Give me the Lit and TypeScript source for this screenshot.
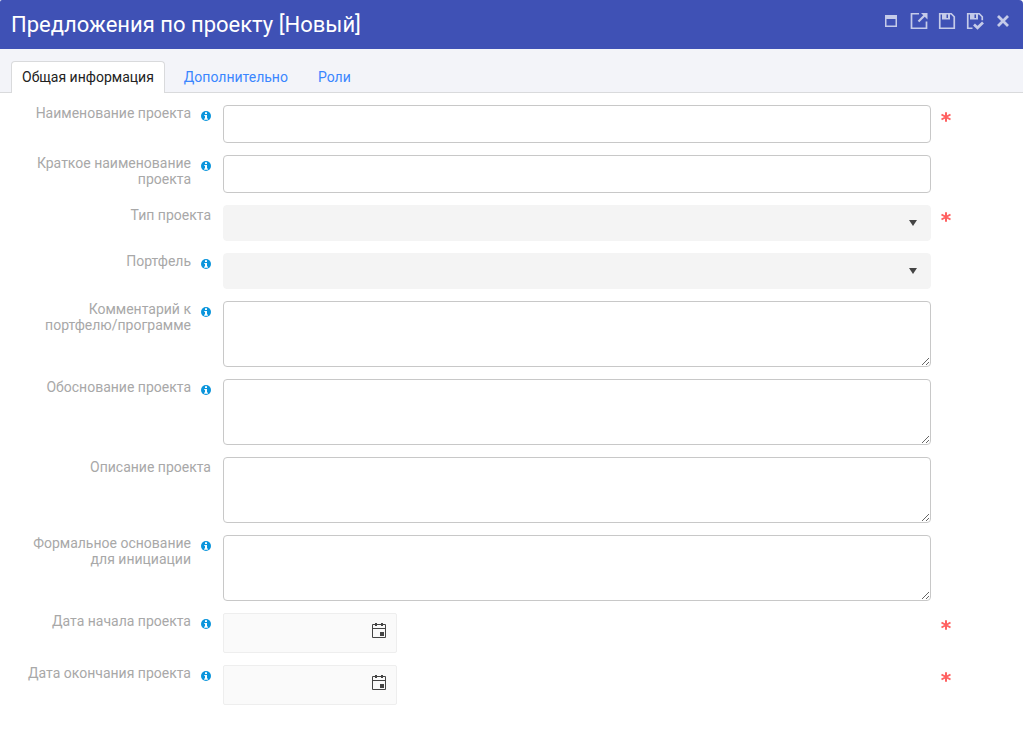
import { LitElement, html, css, svg, nothing } from "lit";
import { customElement, state } from "lit/decorators.js";

type Kind = "text" | "select" | "area" | "date";

interface Field {
  id: string;
  label: string;
  kind: Kind;
  hint?: boolean;
  required?: boolean;
}

const FIELDS: Field[] = [
  { id: "name", label: "Наименование проекта", kind: "text", hint: true, required: true },
  { id: "short-name", label: "Краткое наименование проекта", kind: "text", hint: true },
  { id: "type", label: "Тип проекта", kind: "select", required: true },
  { id: "portfolio", label: "Портфель", kind: "select", hint: true },
  { id: "comment", label: "Комментарий к портфелю/программе", kind: "area", hint: true },
  { id: "reason", label: "Обоснование проекта", kind: "area", hint: true },
  { id: "description", label: "Описание проекта", kind: "area" },
  { id: "basis", label: "Формальное основание для инициации", kind: "area", hint: true },
  { id: "start", label: "Дата начала проекта", kind: "date", hint: true, required: true },
  { id: "end", label: "Дата окончания проекта", kind: "date", hint: true, required: true },
];

const TABS = ["Общая информация", "Дополнительно", "Роли"];

const ACTIONS = [
  {
    title: "Развернуть",
    icon: svg`<path d="M3.75 3.75h10.500v10.500H3.750z" stroke-width="1.500"/><path d="M3 5h12" stroke-width="4"/>`,
  },
  {
    title: "Открыть в новом окне",
    icon: svg`<path d="M9 1.750H1.500v14.500h15V9.500" stroke-width="1.700"/><path d="M8.500 9.500l6-6" stroke-width="2.200"/><path d="M11 1h6.500v6.500z" fill="currentColor" stroke="none"/>`,
  },
  {
    title: "Сохранить",
    icon: svg`<path d="M1.750 1.750h11.500l3 3v11.500H1.750z" stroke-width="1.700"/><path d="M4 1h8v6.500H4z" fill="currentColor" stroke="none"/><path class="slot" d="M8.500 2.500H10v3.500H8.500z"/>`,
  },
  {
    title: "Сохранить и закрыть",
    icon: svg`<path d="M6.500 16.250H1.750V1.750h11.500l3 3v3.500" stroke-width="1.700"/><path d="M4 1h8v6.500H4z" fill="currentColor" stroke="none"/><path class="slot" d="M8.500 2.500H10v3.500H8.500z"/><path d="M8 12.500l3.500 3.300 5.500-5.300" stroke-width="2.700"/>`,
  },
  {
    title: "Закрыть",
    icon: svg`<path d="M4 4l10 10m0-10l-10 10" stroke-width="2.800"/>`,
  },
];

@customElement("app-root")
export class AppRoot extends LitElement {
  @state() private active = 0;

  static styles = css`
    :host {
      display: block;
      min-height: 100vh;
      background: #fff;
      color: #222;
      font: 14px/16px Roboto, "Liberation Sans", sans-serif;
    }
    * {
      box-sizing: border-box;
    }
    .header {
      display: flex;
      justify-content: space-between;
      align-items: flex-start;
      height: 49px;
      padding: 12px 11px;
      background: #3f51b5;
      border-radius: 2px 4px 0 0;
      color: #fff;
    }
    .title {
      margin: 0;
      font-size: 22px;
      font-weight: 400;
      line-height: 25px;
    }
    .actions {
      display: flex;
      gap: 10px;
    }
    .action {
      display: block;
      width: 18px;
      height: 18px;
      padding: 0;
      border: 0;
      background: none;
      color: #c5cbe9;
      cursor: pointer;
    }
    .action svg {
      display: block;
      fill: none;
      stroke: currentColor;
    }
    .action .slot {
      fill: #3f51b5;
      stroke: none;
    }
    .tabs {
      display: flex;
      gap: 8px;
      height: 44px;
      padding: 12px 11px 0;
      background: #f3f4f9;
      border-bottom: 1px solid #d9dadc;
    }
    .tab {
      height: 32px;
      padding: 0 10px 2px;
      border: 1px solid transparent;
      border-bottom: 0;
      border-radius: 4px 4px 0 0;
      background: none;
      color: #3a86ff;
      font: inherit;
      cursor: pointer;
    }
    .tab.active {
      background: #fff;
      border-color: #d9dadc;
      color: #222;
    }
    .form {
      display: grid;
      gap: 12px;
      padding: 12px 0;
    }
    .row {
      display: grid;
      grid-template-columns: 211px minmax(0, 1fr) 80px;
      column-gap: 12px;
      align-items: start;
    }
    .caption {
      display: flex;
      justify-content: flex-end;
      gap: 10px;
      padding-left: 20px;
      color: #a8a8a8;
      text-align: right;
    }
    .caption.plain {
      padding-top: 2px;
    }
    .hint {
      flex: none;
      margin-top: 6px;
    }
    .control {
      display: block;
      width: 100%;
      margin: 0;
      border: 1px solid #c8c8c8;
      border-radius: 4px;
      background: #fff;
      font: inherit;
      padding: 8px;
    }
    .text {
      height: 38px;
    }
    .area {
      height: 66px;
      resize: vertical;
    }
    .picker {
      display: grid;
      align-items: center;
    }
    .picker > * {
      grid-area: 1 / 1;
    }
    .picker .glyph {
      justify-self: end;
      pointer-events: none;
    }
    .select {
      height: 36px;
      appearance: none;
      background: #f4f4f4;
      border-color: #f4f4f4;
    }
    .arrow {
      margin-right: 14px;
    }
    .date {
      width: 174px;
    }
    .date .control {
      height: 40px;
      background: #fafafa;
      border-color: #eee;
      border-radius: 2px;
    }
    .calendar {
      justify-self: end;
      width: 16px;
      height: 16px;
      margin: 0 10px 4px;
      padding: 0;
      border: 0;
      background: none;
      cursor: pointer;
    }
    .calendar svg {
      display: block;
    }
    .star {
      margin: 7px 0 0 -2px;
    }
  `;

  private renderControl(f: Field) {
    switch (f.kind) {
      case "text":
        return html`<input class="control text" id=${f.id} type="text" ?required=${f.required} />`;
      case "area":
        return html`<textarea class="control area" id=${f.id}></textarea>`;
      case "select":
        return html`<div class="picker">
          <select class="control select" id=${f.id} ?required=${f.required}><option value=""></option></select>
          <svg class="glyph arrow" width="8" height="6" viewBox="0 0 8 6" aria-hidden="true">
            <path d="M0 0h8L4 6z" fill="#444" />
          </svg>
        </div>`;
      case "date":
        return html`<div class="picker date">
          <input class="control" id=${f.id} type="text" ?required=${f.required} />
          <button class="calendar" type="button" aria-label="Выбрать дату">
            <svg width="16" height="16" viewBox="0 0 16 16" fill="none" stroke="#444">
              <path d="M1.500 1.500h13v13h-13zM1.500 5.500h13" />
              <path d="M5 0v3M11 0v3" stroke-width="2" />
              <path d="M9 9h4v4H9z" fill="#444" stroke="none" />
            </svg>
          </button>
        </div>`;
    }
  }

  private renderField(f: Field) {
    return html`<div class="row">
      <div class="caption ${f.hint ? "" : "plain"}">
        <label for=${f.id}>${f.label}</label>
        ${f.hint
          ? html`<svg class="hint" width="10" height="10" viewBox="0 0 10 10" aria-hidden="true">
              <circle cx="5" cy="5" r="5" fill="#0a95dc" />
              <path d="M4 1.200h2V3H4zM3.300 4H6v3.500h.9v1.200H3.100V7.500H4V5h-.7z" fill="#fff" />
            </svg>`
          : nothing}
      </div>
      ${this.renderControl(f)}
      ${f.required
        ? html`<svg class="star" width="10" height="10" viewBox="0 0 10 10" aria-hidden="true">
            <path d="M5 .3v9.400M.5 2.500l9 5M9.500 2.500l-9 5" stroke="#ff6161" stroke-width="2" />
          </svg>`
        : nothing}
    </div>`;
  }

  render() {
    return html`
      <header class="header">
        <h1 class="title">Предложения по проекту [Новый]</h1>
        <div class="actions">
          ${ACTIONS.map(
            (a) => html`<button class="action" type="button" aria-label=${a.title}>
              <svg width="18" height="18" viewBox="0 0 18 18">${a.icon}</svg>
            </button>`,
          )}
        </div>
      </header>
      <div class="tabs" role="tablist">
        ${TABS.map(
          (t, i) => html`<button
            class="tab ${i === this.active ? "active" : ""}"
            type="button"
            role="tab"
            aria-selected=${i === this.active}
            @click=${() => (this.active = i)}
          >${t}</button>`,
        )}
      </div>
      <form class="form">${FIELDS.map((f) => this.renderField(f))}</form>
    `;
  }
}
